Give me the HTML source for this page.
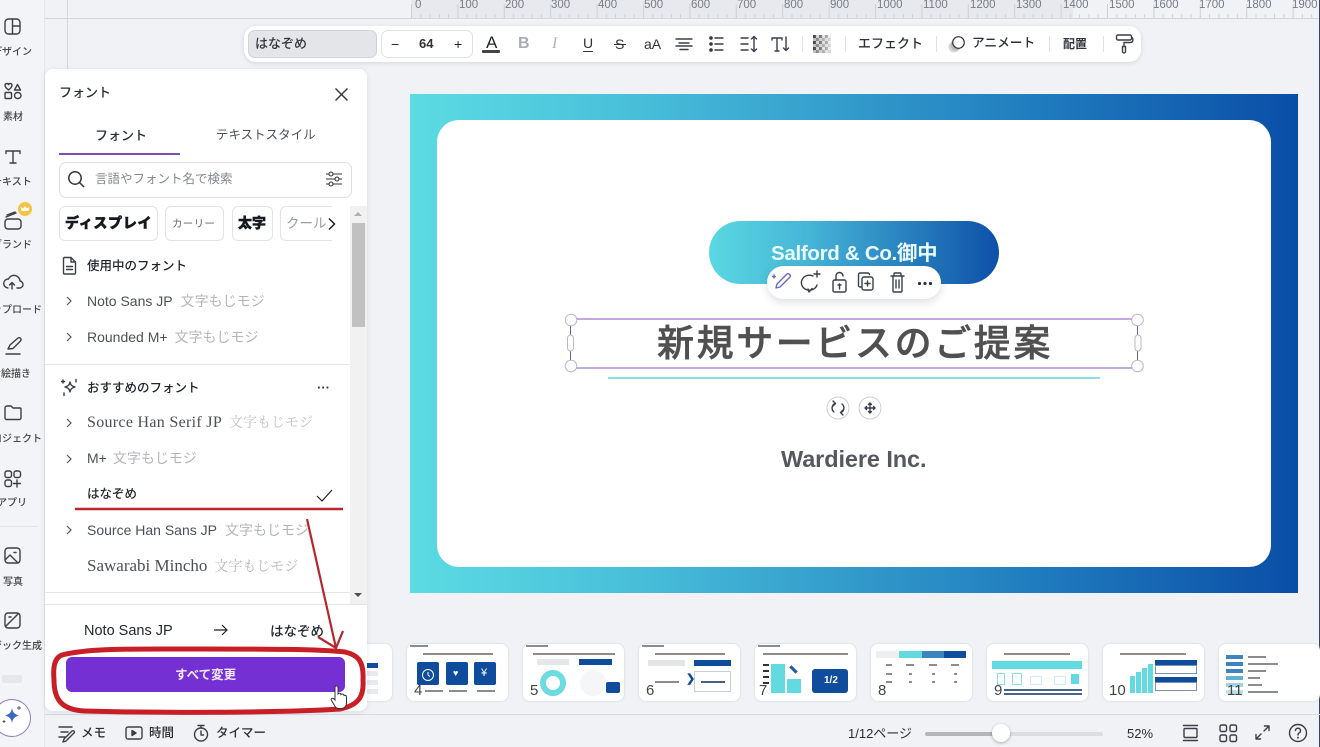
<!DOCTYPE html>
<html lang="ja"><head><meta charset="utf-8"><style>
*{box-sizing:border-box}
html,body{margin:0;padding:0}
body{width:1320px;height:747px;overflow:hidden;position:relative;background:#f1f2f6;font-family:"Liberation Sans","Noto Sans CJK JP",sans-serif;color:#1f2328}
#w{position:absolute;left:0;top:0;width:1320px;height:747px;overflow:hidden;filter:blur(.3px)}
.t{position:absolute;white-space:nowrap;line-height:1}
.b{position:absolute}
svg{position:absolute;overflow:visible}
.i{fill:none;stroke:#3a3f47;stroke-width:1.4;stroke-linecap:round;stroke-linejoin:round}
.side{font-size:10px;color:#444;font-weight:500}
.sample{color:#b4b6ba}
.row{font-size:14px;color:#4c5056}
.r{font-size:11.5px;color:#767c86}
.thumb{position:absolute;top:644px;height:57px;width:101px;background:#fff;border-radius:7px;box-shadow:0 0 2px #c9ccd3;overflow:hidden}
.num{position:absolute;left:7px;bottom:3px;font-size:13px;color:#444;line-height:1}
.bar{position:absolute;background:#0f4c9c}
.cy{position:absolute;background:#63dae0}
.gl{position:absolute;background:#8c8c8c;height:2px}
</style></head><body><div id="w">

<!-- sidebar -->
<div class="b" style="left:0;top:0;width:45px;height:747px;background:#f3f4f7;border-right:1px solid #e3e5ea"></div>
<div class="b" style="left:67px;top:0;width:1px;height:70px;background:#d4d6dc"></div>
<div class="b" style="left:45px;top:18px;width:1275px;height:1px;background:#d4d6dc"></div>
<div class="b" style="left:1319px;top:0;width:1px;height:747px;background:#3a4660"></div>

<svg width="45" height="680" style="left:0;top:0">
<g class="i">
<rect x="5" y="19" width="15" height="15" rx="3.500"/><path d="M12.500 19V34M12.500 26H20"/>
<path d="M8.500 90c-2.500-2-3.500-3-3.500-4.500 0-2.500 3-2.500 3.500-.8.500-1.700 3.500-1.700 3.500.8 0 1.500-1 2.500-3.500 4.500z"/><path d="M14.500 90l3-5.500 3 5.500z"/>
<rect x="5" y="92.500" width="6.500" height="6" rx="1"/><rect x="14.500" y="92.500" width="6.500" height="6" rx="3"/>
<path d="M6 151h14M6 151v2.500M20 151v2.500M13 151v12M10 163h6"/>
<rect x="5" y="219" width="16" height="10" rx="3"/><path d="M6 217l10-4M7 215l8-3"/>
<path d="M8 288a4.500 4.500 0 0 1 .5-9 6 6 0 0 1 11.500 2 3.500 3.500 0 0 1-1 7h-2M12 289v-6M9.500 285l2.500-2.500 2.500 2.500"/>
<path d="M8 349l2-4 8-7c2-1 4 1 2.500 3l-7.500 7.500zM6 354h14"/>
<path d="M5 408a2 2 0 0 1 2-2h4l2 2h7a1 1 0 0 1 1 1v9a1.500 1.500 0 0 1-1.500 1.500h-13A1.500 1.500 0 0 1 5 418z"/>
<rect x="5" y="471" width="6.500" height="6.500" rx="2"/><rect x="14" y="471" width="6.500" height="6.500" rx="2"/><rect x="5" y="480" width="6.500" height="6.500" rx="2"/><path d="M17 480v7M13.500 483.500h7"/>
<rect x="5" y="548" width="15" height="15" rx="3"/><path d="M5 560l5-5 8 8M14 552.500h2"/>
<rect x="5" y="613" width="15" height="15" rx="3"/><path d="M6 626l12-12M9 617h2"/>
</g>
<circle cx="25" cy="209" r="7" fill="#f6c445"/>
<path d="M21.500 211l-.8-4 2.500 1.600 1.800-2.600 1.800 2.600 2.500-1.600-.8 4z" fill="#fff"/>
</svg>
<div class="t side" style="left:-8px;top:48px">デザイン</div>
<div class="t side" style="left:3px;top:113px">素材</div>
<div class="t side" style="left:-8px;top:178px">テキスト</div>
<div class="t side" style="left:-8px;top:241px">ブランド</div>
<div class="t side" style="left:-18px;top:306px">アップロード</div>
<div class="t side" style="left:-9px;top:370px">お絵描き</div>
<div class="t side" style="left:-18px;top:435px">プロジェクト</div>
<div class="t side" style="left:-3px;top:499px">アプリ</div>
<div class="b" style="left:0;top:526px;width:38px;height:1px;background:#e2e4e9"></div>
<div class="t side" style="left:3px;top:578px">写真</div>
<div class="t side" style="left:-18px;top:642px">マジック生成</div>
<div class="b" style="left:2px;top:675px;width:20px;height:8px;background:#e6e7ea;border-radius:2px"></div>
<div class="b" style="left:-7px;top:699px;width:38px;height:38px;border-radius:50%;background:#fff;border:1px solid #8b7fb8"></div>
<svg width="30" height="30" style="left:0;top:702px">
<path d="M12 6c1 5 2.500 6 7 7.500-4.500 1.500-6 2.500-7 7.500-1-5-2.500-6-7-7.500 4.500-1.500 6-2.500 7-7.500z" fill="#3c68c4"/>
<path d="M19 4v4M17 6h4M4 18v3M2.500 19.500h3" stroke="#555" stroke-width=".9"/>
</svg>

<!-- ruler -->
<div id="rul" class="b" style="left:411px;top:0;width:909px;height:18px;overflow:hidden">
<div class="b" style="left:0;top:0;width:662px;height:18px;background:#e8e9ee"></div>
<svg width="909" height="18" style="left:0;top:0"><defs><pattern id="tk" width="9.280" height="18" patternUnits="userSpaceOnUse"><path d="M.5 14V18" stroke="#d0d2d8"/></pattern><pattern id="tk2" width="46.400" height="18" patternUnits="userSpaceOnUse"><path d="M.5 4V18" stroke="#cfd1d7"/></pattern></defs><rect width="909" height="18" fill="url(#tk)"/><rect width="909" height="18" fill="url(#tk2)"/></svg>
<span class="t r" style="left:4px;top:0">0</span><span class="t r" style="left:48px;top:0">100</span><span class="t r" style="left:94px;top:0">200</span><span class="t r" style="left:140px;top:0">300</span><span class="t r" style="left:187px;top:0">400</span><span class="t r" style="left:233px;top:0">500</span><span class="t r" style="left:280px;top:0">600</span><span class="t r" style="left:326px;top:0">700</span><span class="t r" style="left:373px;top:0">800</span><span class="t r" style="left:419px;top:0">900</span><span class="t r" style="left:466px;top:0">1000</span><span class="t r" style="left:512px;top:0">1100</span><span class="t r" style="left:559px;top:0">1200</span><span class="t r" style="left:605px;top:0">1300</span><span class="t r" style="left:652px;top:0">1400</span><span class="t r" style="left:698px;top:0">1500</span><span class="t r" style="left:742px;top:0">1600</span><span class="t r" style="left:788px;top:0">1700</span><span class="t r" style="left:835px;top:0">1800</span><span class="t r" style="left:881px;top:0">1900</span>
</div>

<!-- toolbar -->
<div class="b" style="left:244px;top:26px;width:897px;height:36px;background:#fff;border-radius:12px;box-shadow:0 1px 5px rgba(60,66,87,.16)"></div>
<div class="b" style="left:248px;top:30px;width:129px;height:28px;background:#e3e5e9;border:1px solid #cfd2d7;border-radius:7px"></div>
<div class="t" style="left:255px;top:37px;font-size:13px;font-weight:500;color:#30343a">はなぞめ</div>
<div class="b" style="left:381px;top:30px;width:92px;height:28px;border:1px solid #dfe1e5;border-radius:7px"></div>
<div class="t" style="left:391px;top:37px;font-size:14px">−</div>
<div class="t" style="left:419px;top:37px;font-size:13px;font-weight:700;color:#333">64</div>
<div class="t" style="left:454px;top:37px;font-size:14px">+</div>
<div class="t" style="left:486px;top:34px;font-size:17px;color:#23272d">A</div>
<div class="b" style="left:482px;top:50px;width:18px;height:3px;background:#444;border-radius:1px"></div>
<div class="t" style="left:518px;top:36px;font-size:16px;font-weight:700;color:#a9acb1">B</div>
<div class="t" style="left:552px;top:36px;font-size:16px;font-style:italic;font-family:'Liberation Serif',serif;color:#b0b2b6">I</div>
<div class="t" style="left:583px;top:36px;font-size:14px;color:#333">U</div>
<div class="b" style="left:583px;top:51px;width:10px;height:1px;background:#333"></div>
<div class="t" style="left:615px;top:37px;font-size:14px;color:#333">S</div>
<div class="b" style="left:614px;top:44px;width:12px;height:1px;background:#333"></div>
<div class="t" style="left:644px;top:37px;font-size:14px;color:#333">aA</div>
<svg width="320" height="36" style="left:672px;top:26px">
<g class="i" stroke-width="1.300">
<path d="M4 13h16M7 17h10M4 20h16M8 23.500h8"/>
<path d="M43 12h8M43 18h8M43 24h8"/>
<path d="M69 12h7M69 18h7M69 24h7"/>
<path d="M82 11v14M79.500 13l2.500-2.500 2.500 2.500M79.500 23l2.500 2.500 2.500-2.500"/>
<path d="M100 12h10M105 12v13M103 25h4M100 12v2M110 12v2"/>
<path d="M114 11v13M111.500 22l2.500 2.500 2.500-2.500"/>
</g>
<circle cx="39" cy="12" r="1.800" fill="#333"/><circle cx="39" cy="18" r="1.800" fill="#333"/><circle cx="39" cy="24" r="1.800" fill="#333"/>
</svg>
<div class="b" style="left:802px;top:36px;width:1px;height:16px;background:#e2e4e8"></div>
<svg width="20" height="18" style="left:813px;top:35px"><defs><pattern id="ck" width="6" height="6" patternUnits="userSpaceOnUse"><rect width="3" height="3" fill="#444"/><rect x="3" y="3" width="3" height="3" fill="#777"/><rect x="3" width="3" height="3" fill="#ccc"/><rect y="3" width="3" height="3" fill="#bbb"/></pattern><linearGradient id="fd"><stop offset="0" stop-color="#fff" stop-opacity="0"/><stop offset="1" stop-color="#fff" stop-opacity=".75"/></linearGradient></defs><rect width="18" height="18" fill="url(#ck)"/><rect width="18" height="18" fill="url(#fd)"/></svg>
<div class="b" style="left:845px;top:36px;width:1px;height:16px;background:#dfe1e5"></div>
<div class="t" style="left:858px;top:37px;font-size:13px;font-weight:500;color:#2b2f35">エフェクト</div>
<div class="b" style="left:936px;top:36px;width:1px;height:16px;background:#dfe1e5"></div>
<svg width="24" height="24" style="left:947px;top:32px"><circle cx="7" cy="15" r="5.500" fill="#d5d6d9"/><circle cx="9" cy="13" r="5.500" fill="#b9bbbf" /><circle cx="11.500" cy="10.500" r="5.800" fill="#fff" stroke="#333" stroke-width="1.200"/></svg>
<div class="t" style="left:972px;top:37px;font-size:12.700px;font-weight:500;color:#2b2f35">アニメート</div>
<div class="b" style="left:1049px;top:36px;width:1px;height:16px;background:#dfe1e5"></div>
<div class="t" style="left:1063px;top:38px;font-size:12px;font-weight:700;color:#33373d">配置</div>
<div class="b" style="left:1103px;top:36px;width:1px;height:16px;background:#dfe1e5"></div>
<svg width="22" height="24" style="left:1115px;top:32px"><path class="i" stroke-width="1.500" d="M3 3h12a1.500 1.500 0 0 1 1.500 1.500v2A1.500 1.500 0 0 1 15 8H3a1.500 1.500 0 0 1-1.500-1.500v-2A1.500 1.500 0 0 1 3 3zM16.500 5.500c2 0 2 5-1 5H9v4M7.500 14.500h3v5a1.500 1.500 0 0 1-3 0z"/></svg>

<!-- canvas page -->
<div class="b" style="left:410px;top:94px;width:888px;height:499px;background:linear-gradient(90deg,#5cdbe3 0%,#4bc3db 22%,#2280c0 68%,#0a4ea7 100%)"></div>
<div class="b" style="left:437px;top:120px;width:834px;height:447px;background:#fff;border-radius:22px"></div>
<div class="b" style="left:709px;top:221px;width:290px;height:63px;border-radius:32px;background:linear-gradient(90deg,#5ad8e2 0%,#45b4d6 35%,#0d50a8 100%)"></div>
<div class="t" style="left:771px;top:244px;font-size:20.500px;font-weight:700;color:#e9fbfd;letter-spacing:-.3px">Salford &amp; Co.御中</div>
<div class="b" style="left:767px;top:266px;width:174px;height:33px;background:#fff;border-radius:17px;box-shadow:0 3px 9px rgba(60,66,87,.18)"></div>
<svg width="174" height="33" style="left:767px;top:266px">
<g class="i" stroke-width="1.300">
<path d="M9 22l1-4 10-10c2-1 4 1 3 3L13 21z" stroke="#6a68b8"/><path d="M7 9v3M5.500 10.500h3" stroke="#6a68b8"/>
<path d="M46 10a8 7.500 0 1 0 4 9M41 23l1 3 3-3.500M50 5v6M47 8h6"/>
<rect x="66" y="14" width="13" height="12" rx="1.500"/><path d="M69 14v-4a3.500 3.500 0 0 1 7 0M72.500 18v5M71 19h3"/>
<rect x="95" y="11" width="11" height="13" rx="2"/><path d="M94 21h-1a1.500 1.500 0 0 1-1.500-1.500v-11A1.500 1.500 0 0 1 93 7h8a1.500 1.500 0 0 1 1.500 1.500M100.500 15v5M98 17.500h5"/>
<path d="M124 10h13M127 10V8a1 1 0 0 1 1-1h5a1 1 0 0 1 1 1v2M126 10v15a1 1 0 0 0 1 1h7a1 1 0 0 0 1-1V10M129 14v8M132 14v8"/>
</g>
<circle cx="152.500" cy="17.500" r="1.600" fill="#333"/><circle cx="158" cy="17.500" r="1.600" fill="#333"/><circle cx="163.500" cy="17.500" r="1.600" fill="#333"/>
</svg>

<!-- selected title -->
<div class="b" style="left:570px;top:318px;width:568px;height:51px;border:1px solid #6d5a9c;border-top:2px solid #c3a9e3;border-bottom:2px solid #c3a9e3"></div>
<div class="t" style="left:657px;top:323px;font-size:37px;line-height:42px;font-weight:500;color:#505050;letter-spacing:2.600px;-webkit-text-stroke:.5px #505050">新規サービスのご提案</div>
<svg width="600" height="70" style="left:560px;top:310px">
<g fill="#fff" stroke="#b8bac0"><circle cx="11" cy="10" r="5.800"/><circle cx="11" cy="56" r="5.800"/><circle cx="577.500" cy="10" r="5.800"/><circle cx="577.500" cy="56" r="5.800"/><rect x="7.500" y="25" width="6" height="16" rx="3"/><rect x="575" y="25" width="6" height="16" rx="3"/></g>
</svg>
<div class="b" style="left:608px;top:377px;width:492px;height:2px;background:#8fdce3"></div>
<svg width="90" height="30" style="left:822px;top:393px">
<g fill="#fff" stroke="#ccced3"><circle cx="16" cy="15" r="11"/><circle cx="48" cy="15" r="11"/></g>
<g class="i" stroke-width="1"><path d="M12 19a5 5 0 0 1 1-8.500M20 11a5 5 0 0 1-1 8.500M11 8l2.500 2.500L11 13M21 22l-2.500-2.500L21 17"/><path d="M48 10v10M43 15h10M46.500 11.500L48 10l1.500 1.500M46.500 18.500L48 20l1.500-1.500M44.500 13.500L43 15l1.500 1.500M51.500 13.500L53 15l-1.500 1.500"/></g>
</svg>
<div class="t" style="left:781px;top:448px;font-size:23.500px;font-weight:700;color:#55595f;letter-spacing:-.1px">Wardiere Inc.</div>

<!-- thumbnails -->
<div class="thumb" style="left:291px"><div class="bar" style="left:60px;top:19px;width:27px;height:5px"></div><div class="b" style="left:60px;top:27px;width:27px;height:5px;background:#e8eaed"></div><div class="b" style="left:60px;top:36px;width:27px;height:5px;background:#e8eaed"></div><div class="b" style="left:60px;top:45px;width:27px;height:5px;background:#e8eaed"></div></div>
<div class="thumb" style="left:407px"><div class="gl" style="left:3px;top:1px;width:18px"></div><div class="gl" style="left:16px;top:9px;width:70px"></div><div class="bar" style="left:10px;top:18px;width:22px;height:23px;border-radius:2px"></div><div class="bar" style="left:39px;top:18px;width:22px;height:23px;border-radius:2px"></div><div class="bar" style="left:67px;top:18px;width:22px;height:23px;border-radius:2px"></div><div class="t" style="left:46px;top:25px;font-size:9px;color:#fff">♥</div><div class="t" style="left:74px;top:24px;font-size:11px;color:#fff">¥</div><div class="num" style="font-size:15px">4</div><div class="gl" style="left:18px;top:46px;width:18px"></div><div class="gl" style="left:42px;top:46px;width:18px"></div><div class="gl" style="left:70px;top:46px;width:18px"></div><svg width="16" height="16" style="left:13px;top:23px"><circle cx="8" cy="8" r="5.500" fill="none" stroke="#fff"/><path d="M8 5v3l2 1.500" fill="none" stroke="#fff"/></svg></div>
<div class="thumb" style="left:523px"><div class="gl" style="left:3px;top:1px;width:22px"></div><div class="gl" style="left:10px;top:9px;width:82px"></div><div class="b" style="left:14px;top:15px;width:32px;height:6px;background:#e6e7e9"></div><div class="bar" style="left:56px;top:15px;width:33px;height:6px"></div><div class="b" style="left:17px;top:26px;width:26px;height:26px;border-radius:50%;border:6px solid #6edbe0"></div><div class="b" style="left:57px;top:26px;width:26px;height:26px;border-radius:50%;background:#f5f6f7"></div><div class="bar" style="left:83px;top:38px;width:14px;height:11px;border-radius:2px"></div><div class="num" style="font-size:15px">5</div></div>
<div class="thumb" style="left:639px"><div class="gl" style="left:3px;top:1px;width:22px"></div><div class="gl" style="left:16px;top:9px;width:70px"></div><div class="b" style="left:9px;top:16px;width:37px;height:6px;background:#e4e5e7"></div><div class="bar" style="left:55px;top:16px;width:37px;height:6px"></div><div class="b" style="left:55px;top:27px;width:37px;height:21px;border:1px solid #c9ced6"></div><div class="gl" style="left:62px;top:37px;width:24px;background:#4a5f86"></div><div class="gl" style="left:16px;top:37px;width:24px"></div><div class="t" style="left:47px;top:30px;font-size:11px;font-weight:700;color:#0f4c9c">❯</div><div class="num" style="font-size:15px">6</div></div>
<div class="thumb" style="left:755px"><div class="gl" style="left:3px;top:1px;width:22px"></div><div class="gl" style="left:8px;top:9px;width:85px"></div><div class="cy" style="left:16px;top:20px;width:14px;height:29px"></div><div class="cy" style="left:32px;top:35px;width:14px;height:14px"></div><div class="bar" style="left:57px;top:25px;width:36px;height:24px;border-radius:3px"></div><div class="t" style="left:69px;top:32px;font-size:10px;font-weight:700;color:#fff">1/2</div><div class="bar" style="left:34px;top:24px;width:9px;height:3px;transform:rotate(45deg);background:#1d5ca5"></div><div class="bar" style="left:8px;top:20px;width:6px;height:2px;background:#333"></div><div class="bar" style="left:8px;top:26px;width:6px;height:2px;background:#333"></div><div class="bar" style="left:8px;top:32px;width:6px;height:2px;background:#333"></div><div class="bar" style="left:8px;top:38px;width:6px;height:2px;background:#333"></div><div class="num" style="font-size:15px;left:4px">7</div></div>
<div class="thumb" style="left:871px"><div class="b" style="left:5px;top:7px;width:23px;height:7px;background:#eeeff1"></div><div class="cy" style="left:28px;top:7px;width:23px;height:7px"></div><div class="bar" style="left:51px;top:7px;width:22px;height:7px;background:#3d86bd"></div><div class="bar" style="left:73px;top:7px;width:22px;height:7px"></div><div class="gl" style="left:15px;top:20px;width:6px"></div><div class="gl" style="left:35px;top:20px;width:8px"></div><div class="gl" style="left:58px;top:20px;width:8px"></div><div class="gl" style="left:80px;top:20px;width:8px"></div><div class="gl" style="left:15px;top:29px;width:6px"></div><div class="gl" style="left:15px;top:37px;width:6px"></div><div class="gl" style="left:38px;top:29px;width:3px"></div><div class="gl" style="left:61px;top:29px;width:3px"></div><div class="gl" style="left:83px;top:29px;width:3px"></div><div class="gl" style="left:38px;top:37px;width:3px"></div><div class="gl" style="left:61px;top:37px;width:3px"></div><div class="gl" style="left:83px;top:37px;width:3px"></div><div class="num" style="font-size:15px">8</div></div>
<div class="thumb" style="left:987px"><div class="gl" style="left:17px;top:9px;width:66px"></div><div class="cy" style="left:5px;top:17px;width:90px;height:8px"></div><div class="b" style="left:10px;top:29px;width:8px;height:12px;border:1px solid #8fdde2"></div><div class="b" style="left:25px;top:29px;width:10px;height:12px;border:1px solid #8fdde2"></div><div class="b" style="left:43px;top:32px;width:12px;height:9px;border:1px solid #cfeef0"></div><div class="b" style="left:67px;top:32px;width:12px;height:9px;border:1px solid #cfeef0"></div><div class="bar" style="left:84px;top:30px;width:8px;height:10px;background:#63dae0"></div><div class="gl" style="left:17px;top:45px;width:78px;background:#476488"></div><div class="gl" style="left:17px;top:49px;width:78px;background:#476488"></div><div class="num" style="font-size:15px">9</div></div>
<div class="thumb" style="left:1103px"><div class="gl" style="left:17px;top:9px;width:66px"></div><div class="cy" style="left:27px;top:32px;width:5px;height:17px"></div><div class="cy" style="left:33px;top:28px;width:5px;height:21px"></div><div class="cy" style="left:39px;top:24px;width:5px;height:25px"></div><div class="cy" style="left:45px;top:20px;width:5px;height:29px"></div><div class="bar" style="left:52px;top:16px;width:42px;height:5px"></div><div class="bar" style="left:52px;top:33px;width:42px;height:5px"></div><div class="b" style="left:52px;top:21px;width:42px;height:9px;border:1px solid #7b8fae"></div><div class="b" style="left:52px;top:38px;width:42px;height:9px;border:1px solid #7b8fae"></div><div class="num" style="font-size:15px;left:6px">10</div></div>
<div class="thumb" style="left:1219px"><div class="bar" style="left:7px;top:11px;width:17px;height:4px;background:#3d86bd"></div><div class="bar" style="left:7px;top:18px;width:17px;height:4px;background:#3d86bd"></div><div class="bar" style="left:7px;top:25px;width:17px;height:4px;background:#3d86bd"></div><div class="bar" style="left:7px;top:32px;width:17px;height:4px;background:#63b0d0"></div><div class="bar" style="left:7px;top:39px;width:17px;height:4px;background:#9ed7e3"></div><div class="bar" style="left:7px;top:46px;width:17px;height:4px;background:#b7e5ea"></div><div class="gl" style="left:29px;top:12px;width:18px"></div><div class="gl" style="left:29px;top:19px;width:30px"></div><div class="gl" style="left:29px;top:26px;width:18px"></div><div class="gl" style="left:29px;top:33px;width:12px"></div><div class="gl" style="left:29px;top:40px;width:14px"></div><div class="gl" style="left:29px;top:47px;width:30px"></div><div class="num" style="font-size:15px;left:8px">11</div></div>

<div class="b" style="left:45px;top:714px;width:1275px;height:1px;background:#d9dbe1"></div>

<!-- panel -->
<div class="b" style="left:45px;top:69px;width:322px;height:642px;background:#fff;border-radius:8px;box-shadow:0 1px 6px rgba(60,66,87,.12)"></div>
<div class="t" style="left:59px;top:86px;font-size:13px;font-weight:500;color:#2a2e34">フォント</div>
<svg width="16" height="16" style="left:334px;top:87px"><path d="M1.500 1.500l12 12M13.500 1.500l-12 12" stroke="#333" stroke-width="1.400" fill="none"/></svg>
<div class="t" style="left:95px;top:129px;font-size:13px;font-weight:500;color:#2a2e34">フォント</div>
<div class="t" style="left:216px;top:129px;font-size:12.500px;color:#4c5056">テキストスタイル</div>
<div class="b" style="left:59px;top:153px;width:121px;height:2px;background:#7d4fb5"></div>
<div class="b" style="left:59px;top:162px;width:293px;height:36px;border:1px solid #dcdee2;border-radius:7px"></div>
<svg width="22" height="22" style="left:66px;top:168px"><circle cx="9" cy="10" r="6.200" fill="none" stroke="#333" stroke-width="1.500"/><path d="M13.500 14.500l4.500 4.500" stroke="#333" stroke-width="1.500"/></svg>
<div class="t" style="left:95px;top:173px;font-size:12.500px;color:#85888e">言語やフォント名で検索</div>
<svg width="20" height="18" style="left:325px;top:170px"><g fill="none" stroke="#333" stroke-width="1.100"><path d="M1 4h16M1 9h16M1 14h16"/><circle cx="6" cy="4" r="2" fill="#fff"/><circle cx="12" cy="9" r="2" fill="#fff"/><circle cx="6" cy="14" r="2" fill="#fff"/></g></svg>
<div class="b" style="left:59px;top:206px;width:99px;height:35px;border:1px solid #e2e3e7;border-radius:6px"></div>
<div class="t" style="left:65px;top:216px;font-size:14px;font-weight:900;color:#15181c;letter-spacing:.7px;-webkit-text-stroke:.5px #15181c">ディスプレイ</div>
<div class="b" style="left:165px;top:206px;width:59px;height:35px;border:1px solid #e2e3e7;border-radius:6px"></div>
<div class="t" style="left:172px;top:219px;font-size:10.500px;color:#666;letter-spacing:.3px">カーリー</div>
<div class="b" style="left:232px;top:206px;width:41px;height:35px;border:1px solid #e2e3e7;border-radius:6px"></div>
<div class="t" style="left:238px;top:216px;font-size:14px;font-weight:900;color:#15181c;-webkit-text-stroke:.4px #15181c">太字</div>
<div class="b" style="left:280px;top:206px;width:52px;height:35px;border:1px solid #e2e3e7;border-right:0;border-radius:6px 0 0 6px"></div>
<div class="t" style="left:286px;top:217px;font-size:13.500px;color:#9a9da2">クール</div>
<svg width="10" height="14" style="left:327px;top:217px"><path d="M2 1.500l5.500 5.500L2 12.500" stroke="#222" stroke-width="1.500" fill="none"/></svg>
<!-- scrollbar -->
<div class="b" style="left:350px;top:206px;width:17px;height:398px;background:#f1f1f2"></div>
<div class="b" style="left:352px;top:223px;width:13px;height:104px;background:#c1c1c1"></div>
<svg width="12" height="6" style="left:352px;top:211px"><path d="M2 5l4-4 4 4z" fill="#b0b0b0"/></svg>
<svg width="12" height="6" style="left:352px;top:592px"><path d="M2 1l4 4 4-4z" fill="#505050"/></svg>

<svg width="18" height="20" style="left:61px;top:256px"><path class="i" d="M2.500 2.500a1 1 0 0 1 1-1H10l4.500 4.500v11a1 1 0 0 1-1 1h-10a1 1 0 0 1-1-1zM10 1.500V6h4.500M5.500 10.500h6M5.500 13.500h6"/></svg>
<div class="t" style="left:87px;top:260px;font-size:12.500px;font-weight:500;color:#20242a">使用中のフォント</div>
<svg width="10" height="300" style="left:65px;top:294px"><g fill="none" stroke="#55585e" stroke-width="1.200"><path d="M2 3l4 4-4 4"/><path d="M2 39l4 4-4 4"/><path d="M2 125l4 4-4 4"/><path d="M2 161l4 4-4 4"/><path d="M2 232l4 4-4 4"/></g></svg>
<div class="t row" style="left:87px;top:294px">Noto Sans JP<span class="sample" style="margin-left:8px">文字もじモジ</span></div>
<div class="t row" style="left:87px;top:330px">Rounded M+<span class="sample" style="margin-left:7px">文字もじモジ</span></div>
<div class="b" style="left:45px;top:364px;width:305px;height:1px;background:#e4e5e8"></div>
<svg width="20" height="20" style="left:60px;top:378px"><path class="i" stroke-width="1.100" d="M10 4c.6 3 1.500 4 5 5-3.500 1-4.400 2-5 5-.6-3-1.500-4-5-5 3.500-1 4.400-2 5-5zM3 2v3M1.500 3.500h3M16 1.500v2.500M4 15v2.500"/></svg>
<div class="t" style="left:87px;top:382px;font-size:12.500px;font-weight:500;color:#20242a">おすすめのフォント</div>
<div class="t" style="left:317px;top:381px;font-size:13px;font-weight:700;color:#333">···</div>
<div class="t row" style="left:87px;top:415px;font-family:'Liberation Serif','Noto Serif CJK SC',serif;font-size:16px;letter-spacing:.3px">Source Han Serif JP<span class="sample" style="margin-left:7px;font-size:14px;letter-spacing:0;color:#bfc1c4">文字もじモジ</span></div>
<div class="t row" style="left:87px;top:451px">M+<span class="sample" style="margin-left:6px">文字もじモジ</span></div>
<div class="t" style="left:87px;top:488px;font-size:12.500px;font-weight:500;color:#23272d">はなぞめ</div>
<svg width="18" height="14" style="left:316px;top:489px"><path d="M1 7l5 5L16 1" fill="none" stroke="#222" stroke-width="1.200"/></svg>
<div class="t row" style="left:87px;top:523px">Source Han Sans JP<span class="sample" style="margin-left:8px">文字もじモジ</span></div>
<div class="t row" style="left:87px;top:557px;font-family:'Liberation Serif','Noto Serif CJK SC',serif;font-size:17px">Sawarabi Mincho<span class="sample" style="margin-left:7px;font-size:14px">文字もじモジ</span></div>
<div class="b" style="left:45px;top:592px;width:305px;height:1px;background:#e4e5e8"></div>
<div class="b" style="left:45px;top:604px;width:322px;height:1px;background:#e4e5e8"></div>
<div class="t" style="left:84px;top:624px;font-size:14.500px;color:#23272d">Noto Sans JP</div>
<svg width="16" height="12" style="left:213px;top:624px"><path d="M1 6h13M9 1l5 5-5 5" fill="none" stroke="#222" stroke-width="1.200"/></svg>
<div class="t" style="left:270px;top:625px;font-size:13.500px;font-weight:500;color:#23272d">はなぞめ</div>
<div class="b" style="left:66px;top:657px;width:279px;height:35px;background:#7530d4;border-radius:6px"></div>
<div class="t" style="left:175px;top:669px;font-size:12.500px;font-weight:700;color:#f1e8fb">すべて変更</div>

<!-- annotations -->
<svg width="1320" height="747" style="left:0;top:0">
<path d="M75 509H343" stroke="#b8272c" stroke-width="2.500" fill="none"/>
<path d="M307 519L336 648M318 637l18 11 7-17" stroke="#b5272d" stroke-width="2.200" fill="none"/>
<path d="M62 655C90 648 130 649 200 649C260 649 320 649 345 652C358 655 364 661 363 680C364 695 360 705 340 709C280 713 150 713 85 711C62 710 54 700 54 680C53 668 54 658 62 655Z" fill="none" stroke="#c81e26" stroke-width="5"/>
<path d="M335 688c0-3 3-3 3 0v6c1-1 3-1 3 .5 1-1 3-.5 3 1 1-.5 2.500 0 2.500 1.500v6c0 3-2 5.500-5 5.500h-3c-2 0-3-1-4-3l-3-5c-1-2 1-3 2.500-1.500l1 1z" fill="#fff" stroke="#333" stroke-width="1"/>
</svg>

<!-- bottom bar -->
<svg width="260" height="24" style="left:55px;top:722px"><g class="i" stroke-width="1.300">
<path d="M4 5h13M6 10h7M4 15h6M8 20l1-3 8-8c2-1 3 1 2 2l-8 8z"/>
<rect x="71" y="5" width="16" height="12" rx="2"/><path d="M77 8.500l4 2.500-4 2.500z" fill="#3a3f47"/>
<circle cx="146" cy="12.500" r="6.500"/><path d="M146 9v4h2.500M143 3.500h6M146 3.500V6"/>
</g></svg>
<div class="t" style="left:81px;top:727px;font-size:12.500px;font-weight:500;color:#2a2e34">メモ</div>
<div class="t" style="left:149px;top:727px;font-size:12.500px;font-weight:500;color:#2a2e34">時間</div>
<div class="t" style="left:216px;top:727px;font-size:12.500px;font-weight:500;color:#2a2e34">タイマー</div>
<div class="t" style="left:848px;top:727px;font-size:13px;color:#2a2e34">1/12ページ</div>
<div class="b" style="left:925px;top:732px;width:178px;height:4px;background:#dcdde2;border-radius:2px"></div>
<div class="b" style="left:925px;top:732px;width:76px;height:4px;background:#b4b6bb;border-radius:2px"></div>
<div class="b" style="left:992px;top:724px;width:18px;height:18px;border-radius:50%;background:#fff;box-shadow:0 1px 3px rgba(0,0,0,.3)"></div>
<div class="t" style="left:1127px;top:727px;font-size:13px;color:#2a2e34">52%</div>
<svg width="150" height="26" style="left:1180px;top:721px"><g class="i" stroke-width="1.400" stroke="#2c3036">
<path d="M3.500 4.500h14M3.500 19.500h14"/><rect x="4" y="7.500" width="13" height="9" rx="1"/>
<rect x="40" y="4" width="6.500" height="6.500" rx="1.500"/><rect x="50" y="4" width="6.500" height="6.500" rx="1.500"/><rect x="40" y="14" width="6.500" height="6.500" rx="1.500"/><rect x="50" y="14" width="6.500" height="6.500" rx="1.500"/>
<path d="M84 10l5-5M84.500 5H89v4.500M81 13l-5 5M76 13.500V18h4.500"/>
<circle cx="118" cy="12" r="8.500"/><path d="M115.500 9.500a2.500 2.500 0 1 1 3.500 2.500c-.7.400-1 1-1 2"/>
</g><circle cx="118" cy="16.700" r=".9" fill="#2c3036"/></svg>
</div></body></html>
